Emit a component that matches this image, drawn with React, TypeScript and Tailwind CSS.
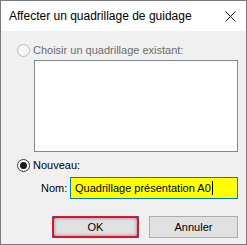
import React from "react";

function Radio({ checked, disabled }: { checked?: boolean; disabled?: boolean }) {
  return (
    <div
      className={
        "w-[13px] h-[13px] rounded-full border flex items-center justify-center shrink-0 " +
        (disabled ? "border-[#bcbcbc] bg-[#f7f7f7]" : "border-[#333333] bg-white")
      }
    >
      {checked && <div className="w-[7px] h-[7px] rounded-full bg-[#1a1a1a]" />}
    </div>
  );
}

export default function App() {
  return (
    <div
      className="w-[247px] h-[245px] border border-[#7a7a7a] bg-[#f0f0f0] flex flex-col text-[11px] text-black"
      style={{ fontFamily: '"Liberation Sans", Arial, sans-serif' }}
    >
      <div className="h-[30px] bg-white flex items-center justify-between pl-[8px] pr-[10px] shrink-0">
        <span className="text-[12px] leading-none">Affecter un quadrillage de guidage</span>
        <svg width="11" height="11" viewBox="0 0 11 11">
          <path d="M0.5 0.5 L10.5 10.5 M10.5 0.5 L0.5 10.5" stroke="#1a1a1a" strokeWidth="1" />
        </svg>
      </div>
      <div className="flex flex-col pl-[16px] pr-[8px]">
        <div className="h-[16px] mt-[11px] flex items-center gap-[3px]">
          <Radio disabled />
          <span className="text-[#6d6d6d] leading-none">Choisir un quadrillage existant:</span>
        </div>
        <div className="ml-[17px] mt-[2px] w-[204px] h-[92px] border border-[#828790] bg-white" />
        <div className="h-[16px] mt-[5px] flex items-center gap-[3px]">
          <Radio checked />
          <span className="leading-none">Nouveau:</span>
        </div>
        <div className="mt-[4px] flex items-center">
          <span className="ml-[24px] w-[29px] leading-none">Nom:</span>
          <div className="w-[168px] h-[22px] border border-[#0078d7] bg-[#ffff00] flex items-center pl-[4px]">
            <span className="leading-none">Quadrillage présentation A0</span>
            <div className="w-px h-[14px] bg-black ml-[1px]" />
          </div>
        </div>
        <div className="mt-[17px] flex justify-end gap-[10px]">
          <div className="relative w-[87px] h-[22px] border border-[#0078d7] bg-[#e1e1e1] flex items-center justify-center">
            <div className="absolute inset-[-1px] rounded-[4px] border-2 border-[#e3102a] shadow-[inset_0_0_3px_1px_rgba(0,0,0,0.25)]" />
            <span className="leading-none">OK</span>
          </div>
          <div className="w-[89px] h-[22px] border border-[#adadad] bg-[#e1e1e1] flex items-center justify-center">
            <span className="leading-none">Annuler</span>
          </div>
        </div>
      </div>
    </div>
  );
}
